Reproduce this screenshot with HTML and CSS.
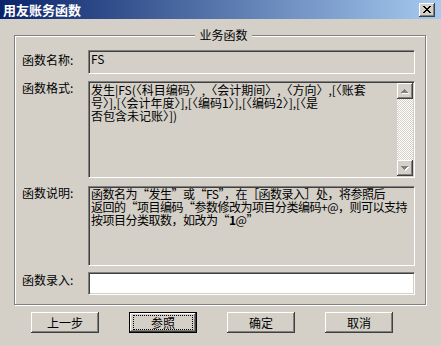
FILE: index.html
```html
<!DOCTYPE html>
<html lang="zh-CN">
<head>
<meta charset="utf-8">
<title>用友账务函数</title>
<link rel="stylesheet" href="styles.css">
</head>
<body>
<div class="window">
  <div class="titlebar">
    <span class="title">用友账务函数</span>
    <span class="close-btn"><svg width="8" height="7" viewBox="0 0 8 7" shape-rendering="crispEdges"><path fill="#000" d="M0 0h2v1h-2z M6 0h2v1h-2z M1 1h2v1h-2z M5 1h2v1h-2z M2 2h4v1h-4z M3 3h2v1h-2z M2 4h4v1h-4z M1 5h2v1h-2z M5 5h2v1h-2z M0 6h2v1h-2z M6 6h2v1h-2z"/></svg></span>
  </div>
  <fieldset class="group">
    <legend>业务函数</legend>
    <div class="row row-name">
      <span class="lbl lbl-name">函数名称:</span>
      <div class="field field-name">FS</div>
    </div>
    <div class="row row-format">
      <span class="lbl">函数格式:</span>
      <div class="field field-format">
        <div class="format-text">发生|FS(〈科目编码〉,〈会计期间〉,〈方向〉,[〈账套<br>号〉],[〈会计年度〉],[〈编码1〉],[〈编码2〉],[〈是<br>否包含未记账〉])</div>
        <div class="scrollbar">
          <span class="sb-btn"><svg width="8" height="5" viewBox="0 0 8 5" shape-rendering="crispEdges"><path fill="#fff" d="M4 1h1v1h-1z M3 2h3v1h-3z M2 3h5v1h-5z M1 4h7v1h-7z"/><path fill="#808080" d="M3 0h1v1h-1z M2 1h3v1h-3z M1 2h5v1h-5z M0 3h7v1h-7z"/></svg></span>
          <span class="sb-track"></span>
          <span class="sb-btn"><svg width="8" height="5" viewBox="0 0 8 5" shape-rendering="crispEdges"><path fill="#fff" d="M1 1h7v1h-7z M2 2h5v1h-5z M3 3h3v1h-3z M4 4h1v1h-1z"/><path fill="#808080" d="M0 0h7v1h-7z M1 1h5v1h-5z M2 2h3v1h-3z M3 3h1v1h-1z"/></svg></span>
        </div>
      </div>
    </div>
    <div class="row row-desc">
      <span class="lbl">函数说明:</span>
      <div class="field field-desc">函数名为“发生”或“FS”，在［函数录入］处，将参照后<br>返回的“项目编码“参数修改为项目分类编码+@，则可以支持<br>按项目分类取数，如改为“<b>1</b>@”</div>
    </div>
    <div class="row row-input">
      <span class="lbl lbl-input">函数录入:</span>
      <div class="field field-input"></div>
    </div>
  </fieldset>
  <div class="buttons">
    <button class="btn" type="button">上一步</button>
    <button class="btn btn-default" type="button"><span class="focus">参照</span></button>
    <button class="btn" type="button">确定</button>
    <button class="btn" type="button">取消</button>
  </div>
</div>
</body>
</html>
```
FILE: styles.css
```css
* { box-sizing: border-box; }
html, body { margin: 0; padding: 0; }
body {
  width: 441px;
  height: 346px;
  overflow: hidden;
  background: #d4d0c8;
  font-family: "Noto Sans CJK SC", "Noto Sans", sans-serif;
  font-size: 12px;
  color: #000;
}
.titlebar {
  height: 19px;
  display: flex;
  align-items: center;
  justify-content: space-between;
  padding: 0 6px 0 3px;
  background: linear-gradient(to right, #0a246a, #a6caf0);
}
.title {
  color: #fff;
  font-weight: bold;
  font-size: 13px;
  line-height: 15px;
}
.close-btn {
  width: 16px;
  height: 14px;
  background: #d4d0c8;
  display: flex;
  align-items: center;
  justify-content: center;
  box-shadow: inset -1px -1px #404040, inset 1px 1px #fff, inset -2px -2px #808080;
}
.group {
  margin: 9px 15px 0 14px;
  padding: 8px 0 9px 7px;
  border: 1px solid #808080;
  box-shadow: inset 1px 1px #fff, 1px 1px #fff;
  min-width: 0;
}
.group legend {
  margin: 0 auto;
  padding: 0 4px;
  line-height: 14px;
  font-size: 12px;
  background: #d4d0c8;
}
.row {
  display: flex;
  align-items: flex-start;
}
.lbl {
  width: 66px;
  flex: none;
  line-height: 14px;
}
.lbl-name { padding-top: 3px; }
.lbl-input { padding-top: 1px; }
.field {
  width: 327px;
  flex: none;
  border: 1px solid;
  border-color: #808080 #fff #fff #808080;
  box-shadow: inset 1px 1px #404040, inset -1px -1px #d4d0c8;
  line-height: 13px;
  white-space: nowrap;
}
.field-name {
  height: 24px;
  padding: 1px 2px;
}
.row-name { margin-bottom: 7px; }
.field-format {
  height: 97px;
  padding: 1px;
  display: flex;
}
.row-format { margin-bottom: 8px; }
.format-text {
  flex: 1;
  min-width: 0;
  padding: 0 1px;
}
.scrollbar {
  width: 16px;
  flex: none;
  display: flex;
  flex-direction: column;
}
.sb-btn {
  width: 16px;
  height: 16px;
  flex: none;
  display: flex;
  align-items: center;
  justify-content: center;
  background: #d4d0c8;
  box-shadow: inset -1px -1px #404040, inset 1px 1px #fff, inset -2px -2px #808080;
}
.sb-track {
  flex: 1;
  background: repeating-conic-gradient(#fff 0 25%, #d4d0c8 0 50%) 0 0 / 2px 2px;
}
.field-desc {
  height: 80px;
  padding: 0 2px;
  letter-spacing: -0.5px;
}
.field-desc b { font-weight: bold; }
.row-desc { margin-bottom: 6px; }
.field-input {
  height: 23px;
  background: #fff;
}
.buttons {
  display: flex;
  gap: 30px;
  padding-left: 31px;
  margin-top: 7px;
}
.btn {
  width: 68px;
  height: 21px;
  padding: 0;
  margin: 0;
  border: none;
  background: #d4d0c8;
  color: #000;
  font-family: inherit;
  font-size: 12px;
  line-height: 21px;
  text-align: center;
  box-shadow: inset -1px -1px #404040, inset 1px 1px #fff, inset -2px -2px #808080;
  display: flex;
  align-items: center;
  justify-content: center;
}
.btn-default {
  box-shadow: inset 0 0 0 1px #000, inset -2px -2px #404040, inset 2px 2px #fff, inset -3px -3px #808080;
}
.focus {
  width: 60px;
  height: 15px;
  border: 1px dotted #000;
  display: flex;
  align-items: center;
  justify-content: center;
  line-height: 13px;
}
```
